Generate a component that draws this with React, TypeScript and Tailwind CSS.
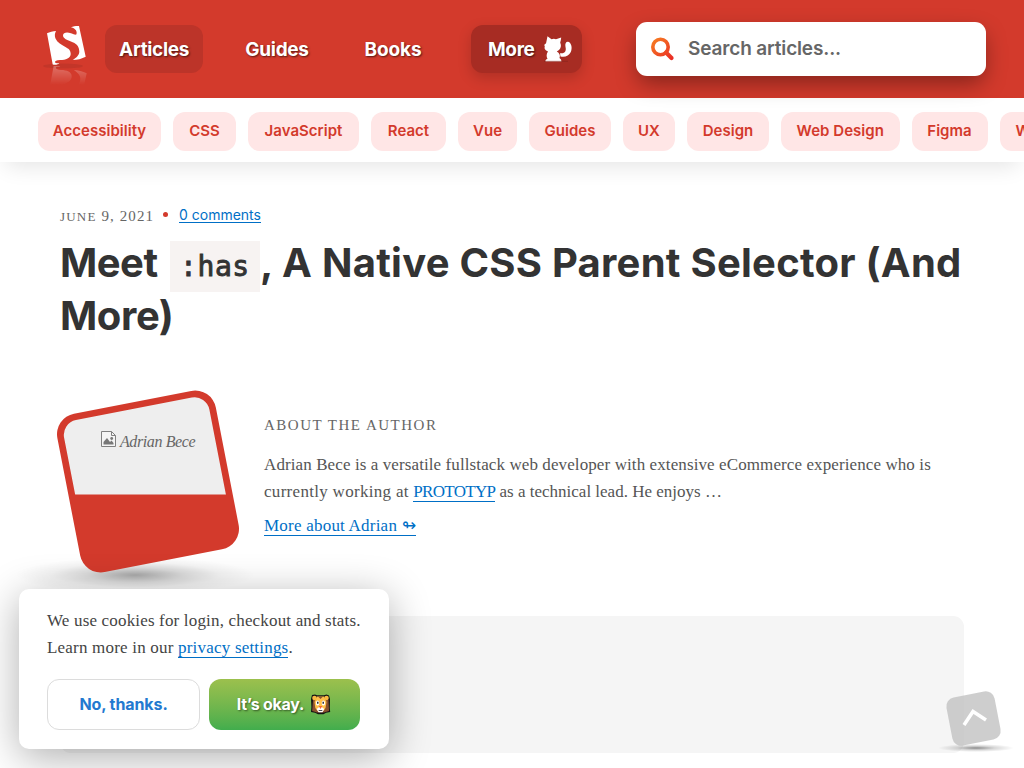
const SANS = "font-['Inter','Liberation_Sans',sans-serif]";
const SERIF = "font-['Liberation_Serif',serif]";

const topics = [
  { label: "Accessibility", box: "w-[123px]" },
  { label: "CSS", box: "w-[63px]" },
  { label: "JavaScript", box: "w-[111px]" },
  { label: "React", box: "w-[75px]" },
  { label: "Vue", box: "w-[59px]" },
  { label: "Guides", box: "w-[82px]" },
  { label: "UX", box: "w-[52px]" },
  { label: "Design", box: "w-[82px]" },
  { label: "Web Design", box: "w-[118.5px]" },
  { label: "Figma", box: "w-[76px]" },
  { label: "Wallpapers", box: "w-[114px]" },
];

function SmashingMark() {
  return (
    <>
      <path d="M5 9.300C7.500 8 11 7.300 14 7C12.600 9.500 12.500 12 13.500 14.500C15.300 18.500 19 20.500 23 22.700C26.500 24.600 28.700 26 28.700 30C28.500 34 24 36 18 36C14.500 36 12.600 37 13 38.600C14 39.600 15.800 39.200 17.300 39.300C16 40.600 13.500 41.300 10.700 40.500Z" />
      <path d="M29 3.300C31.500 2.200 34.500 1.800 37 2L43.700 32.700C40 34.700 35 36 30.700 36C34 34 37.300 31 37.300 27.700C37.300 23 35 20.300 32 18.700C29 17.300 21 15.500 21 11.500C21.200 8.300 25 8 29 9.200C31.500 10 33 11 34.300 10.500C35.500 8 34 4.500 29 3.300Z" />
    </>
  );
}

function Logo() {
  return (
    <svg className="block h-[64px] w-[48px]" viewBox="0 0 48 64" aria-label="Smashing Magazine">
      <defs>
        <linearGradient id="fade" x1="0" y1="0" x2="0" y2="1">
          <stop offset="0" stopColor="#fff" stopOpacity=".28" />
          <stop offset="1" stopColor="#fff" stopOpacity="0" />
        </linearGradient>
        <mask id="fadeMask" maskUnits="userSpaceOnUse" x="0" y="42" width="48" height="20">
          <rect x="0" y="42" width="48" height="19" fill="url(#fade)" />
        </mask>
      </defs>
      <ellipse cx="21" cy="42" rx="20" ry="2.500" fill="#b93428" opacity=".6" />
      <g fill="#fff"><SmashingMark /></g>
      <g mask="url(#fadeMask)">
        <g fill="#fff" transform="translate(1 82) scale(1 -1)"><SmashingMark /></g>
      </g>
    </svg>
  );
}

function Cat() {
  return (
    <svg className="block h-[28px] w-[30px]" viewBox="0 0 30 28" fill="#fff">
      <path d="M4.500 1.200L8.500 4.200Q11 3.500 13 4.200L18.200 2.500Q18 5 17.200 7.500Q19 12 16 15L13.800 16.500Q18 19 16.500 23Q18.500 24 18.500 26.500H2.500Q2 24.500 4.500 24Q2.500 20 5 16.500Q0.500 14.500 1.800 11.500Q0.500 9.500 3 8.500Z" />
      <path d="M17 18.200C22 19 23.500 16 22.500 12C21.800 8.500 23 6.500 25.200 6.800C28.500 8 29.500 13 27.800 17C26 21 22 22.500 17.500 21.500Z" />
      <path d="M1 26.300H25" stroke="#7d211a" strokeWidth=".7" opacity=".7" />
    </svg>
  );
}

function Lion() {
  return (
    <svg className="block h-[21px] w-[21px]" viewBox="0 0 21 21">
      <path d="M2 1L5 .6L7 1.300H14L16.500.6L19 1.500L20 5L19.800 14L20.200 18L16 18.800L13.500 20.200H8L5 18.800L1 18L1.400 13L1 5Z" fill="#141414" />
      <path d="M3 6H18.500L19 17L14 18.500H7L2.200 17Z" fill="#8b512e" />
      <circle cx="4.500" cy="4" r="2.300" fill="#fbb942" />
      <circle cx="16.500" cy="4" r="2.300" fill="#fbb942" />
      <path d="M7 2.500H14L16.500 8L15.500 14L12.500 18H8.500L5.300 14L4.500 8Z" fill="#ffc04a" />
      <path d="M8 2.500H13L10.500 5Z" fill="#8b512e" />
      <ellipse cx="7.600" cy="9" rx="1.700" ry="2.500" fill="#fff" />
      <ellipse cx="13.400" cy="9" rx="1.700" ry="2.500" fill="#fff" />
      <path d="M7.800 7.800V9.700M13.200 7.800V9.700" stroke="#111" strokeWidth="1.300" />
      <path d="M10.500 12L14.300 15L12.500 18.300H8.500L6.700 15Z" fill="#fff" />
      <path d="M8.700 12H12.300L10.500 15Z" fill="#ef6438" />
      <path d="M8.700 16.500H12.300" stroke="#222" strokeWidth=".8" />
    </svg>
  );
}

function BrokenImage() {
  return (
    <svg className="block h-[16px] w-[15px]" viewBox="0 0 15 16" fill="none" stroke="#808080">
      <path d="M.5.5H10.500L14.500 4.500V15.500H.5Z" fill="#f4f4f4" />
      <path d="M10.500.5V4.500H14.500" />
      <path d="M2.500 13.500V11L6 7L9 11L10.500 9.500L12.500 12V13.500Z" fill="#777" stroke="none" />
      <circle cx="10.700" cy="7.500" r="1.400" fill="#777" stroke="none" />
    </svg>
  );
}

function Header() {
  const item = "flex h-12 items-center rounded-xl text-[19px] font-bold text-white [text-shadow:1px_1px_2px_rgba(0,0,0,0.6)]";
  return (
    <header className={`${SANS} flex h-[98px] bg-[#d33a2c] pl-[42px]`}>
      <div className="w-[63px] pt-[24px]"><Logo /></div>
      <nav className="flex pt-[25px]">
        <a className={`${item} w-[98px] justify-center bg-[#bc3429] pt-[2px] tracking-[-0.35px]`}>Articles</a>
        <a className={`${item} ml-[25px] w-[98px] justify-center pt-[2px] tracking-[-0.3px]`}>Guides</a>
        <a className={`${item} ml-[18px] w-[98px] justify-center pt-[2px] tracking-[-0.1px]`}>Books</a>
        <a className={`${item} ml-[29px] w-[111px] bg-[#a72c23] pl-[17px] tracking-[-0.35px] shadow-[0_5px_14px_rgba(0,0,0,0.17)]`}>
          <span className="w-[55px] pt-[2px]">More</span><Cat />
        </a>
      </nav>
      <div className="relative z-10 mt-[22px] ml-[54px] flex h-[54px] w-[350px] items-center rounded-[11px] bg-white pl-[14px] shadow-[0_9px_22px_-2px_rgba(0,0,0,0.38)]">
        <svg className="block h-[26px] w-[26px]" viewBox="0 0 26 26" fill="none" stroke="url(#lens)">
          <defs>
            <linearGradient id="lens" gradientUnits="userSpaceOnUse" x1="2" y1="2" x2="22" y2="24">
              <stop offset="0" stopColor="#f78022" /><stop offset="1" stopColor="#e92a25" />
            </linearGradient>
          </defs>
          <circle cx="10.500" cy="11" r="7.700" strokeWidth="3.600" />
          <path d="M16 16.500L21.500 22" strokeWidth="4.200" strokeLinecap="round" />
        </svg>
        <span className="ml-[12px] pt-px text-[19px] font-semibold tracking-[-0.15px] text-[#666]">Search articles...</span>
      </div>
    </header>
  );
}

function Topics() {
  return (
    <div className="relative flex h-16 gap-3 bg-white pt-[14px] pl-[38px] shadow-[0_10px_22px_-6px_rgba(0,0,0,0.11)]">
      {topics.map((t) => (
        <a key={t.label} className={`${SANS} ${t.box} flex h-[39px] shrink-0 items-center justify-center rounded-xl bg-[#ffe6e6] text-[15px] font-semibold tracking-[0.03px] text-[#d33a2c]`}>
          {t.label}
        </a>
      ))}
    </div>
  );
}

function Portrait() {
  return (
    <div className="relative h-[216px] w-[204px]">
      <svg className="absolute top-0 -left-[60px] h-[226px] w-[264px]" viewBox="0 375 264 226">
        <defs>
          <radialGradient id="ground"><stop offset="0" stopColor="#000" stopOpacity=".34" /><stop offset=".4" stopColor="#000" stopOpacity=".14" /><stop offset=".7" stopColor="#000" stopOpacity=".04" /><stop offset="1" stopColor="#000" stopOpacity="0" /></radialGradient>
          <clipPath id="photo"><rect x="74" y="407.500" width="148" height="148" rx="15" transform="rotate(-11 148 481.500)" /></clipPath>
        </defs>
        <ellipse cx="135" cy="575" rx="120" ry="18" fill="url(#ground)" />
        <rect x="67.300" y="400.800" width="161.400" height="161.400" rx="21" transform="rotate(-11 148 481.500)" fill="#d33a2c" />
        <rect x="50" y="380" width="190" height="114.500" fill="#eee" clipPath="url(#photo)" />
      </svg>
      <div className="absolute top-[56px] left-[41px] flex gap-[4px]">
        <BrokenImage />
        <span className={`${SERIF} pt-px text-[16px] leading-5 tracking-[-0.4px] whitespace-nowrap text-[#666] italic`}>Adrian Bece</span>
      </div>
    </div>
  );
}

function CookieDialog() {
  const link = "border-b border-[#006fc6] text-[#006fc6]";
  return (
    <div className="absolute top-[589px] left-[19px] h-[160px] w-[370px] rounded-[10px] bg-white pt-[18px] pl-[28px] shadow-[0_8px_42px_rgba(0,0,0,0.32)]">
      <p className={`${SERIF} text-[17px] leading-[27px] whitespace-nowrap text-[#444]`}>
        <span className="block tracking-[0.17px]">We use cookies for login, checkout and stats.</span>
        <span className="block tracking-[0.2px]">Learn more in our <a className={`${link} inline-block leading-[18px]`}>privacy settings</a>.</span>
      </p>
      <div className={`${SANS} mt-[18px] flex gap-[9px] text-[16px] font-bold`}>
        <button className="h-[51px] w-[153px] rounded-xl border border-[#dcdcdc] pb-[2px] tracking-[-0.1px] text-[#2379d0]">No, thanks.</button>
        <button className="flex h-[51px] w-[151px] items-center justify-center gap-[6px] rounded-xl bg-linear-to-b from-[#9cc04d] to-[#41ad4d] pr-px tracking-[-0.25px] text-white [text-shadow:1px_1px_2px_rgba(0,0,0,0.5)]">
          <span className="pb-[2px]">It’s okay.</span><Lion />
        </button>
      </div>
    </div>
  );
}

function BackToTop() {
  return (
    <svg className="absolute top-[684px] left-[934px] h-[74px] w-[84px]" viewBox="934 684 84 74">
      <defs><radialGradient id="topShade"><stop offset="0" stopColor="#000" stopOpacity=".45" /><stop offset=".5" stopColor="#000" stopOpacity=".15" /><stop offset="1" stopColor="#000" stopOpacity="0" /></radialGradient></defs>
      <ellipse cx="976" cy="748" rx="38" ry="4" fill="url(#topShade)" />
      <rect x="949" y="694" width="49" height="49" rx="9" transform="rotate(-11 973.500 718.500)" fill="#bdbdbd" fillOpacity=".75" />
      <path d="M964 725L973 711.500L986 720" fill="none" stroke="#fff" strokeWidth="3.500" />
    </svg>
  );
}

export default function App() {
  return (
    <div className="relative h-[768px] w-[1024px] overflow-hidden bg-white">
      <Header />
      <Topics />
      <main className="px-[60px] pt-[43px]">
        <div className="flex h-[22px] items-center">
          <span className={`${SERIF} w-[103px] text-[15px] tracking-[1.1px] whitespace-nowrap text-[#666]`}><span className="text-[13px] tracking-[1.2px]">JUNE</span> 9, 2021</span>
          <span className="mb-[4px] size-[5px] rounded-full bg-[#d33a2c]" />
          <a className={`${SANS} mb-[2px] ml-[11px] border-b border-[#006fc6] text-[14px] leading-[15px] text-[#006fc6]`}>0 comments</a>
        </div>
        <h1 className={`${SANS} mt-[9px] h-[106px] text-[40px] leading-[53px] font-bold whitespace-nowrap text-[#333]`}>
          <span className="flex h-[53px]">
            <span className="w-[110px] tracking-[-0.5px]">Meet</span>
            <code className="mt-[5px] h-[51px] w-[90px] bg-[#f7f3f2] pl-[10px] font-['DejaVu_Sans_Mono',monospace] text-[28px] leading-[52px] font-normal tracking-[0.6px] [-webkit-text-stroke:0.9px_#333]">:has</code>
            <span className="tracking-[0.25px]">, A Native CSS Parent Selector (And</span>
          </span>
          <span className="block tracking-[-0.4px]">More)</span>
        </h1>
        <section className="mt-[33px] flex h-[241px]">
          <Portrait />
          <div className={`${SERIF} pt-[40px] text-[17px] leading-[27px] whitespace-nowrap text-[#555]`}>
            <h2 className="text-[15px] leading-5 tracking-[1.5px] text-[#666]">ABOUT THE AUTHOR</h2>
            <p className="mt-[16px]">
              <span className="block tracking-[0.1px]">Adrian Bece is a versatile fullstack web developer with extensive eCommerce experience who is</span>
              <span className="block"><span className="tracking-[0.3px]">currently working at </span><a className="inline-block border-b border-[#006fc6] leading-[18px] tracking-[-0.7px] text-[#006fc6]">PROTOTYP</a> as a technical lead. He enjoys …</span>
            </p>
            <a className="mt-[12px] inline-block border-b border-[#006fc6] leading-[18px] tracking-[0.22px] text-[#006fc6]">More about Adrian ↬</a>
          </div>
        </section>
        <div className="h-[137px] rounded-[11px] bg-[#f5f5f5]" />
      </main>
      <CookieDialog />
      <BackToTop />
    </div>
  );
}
